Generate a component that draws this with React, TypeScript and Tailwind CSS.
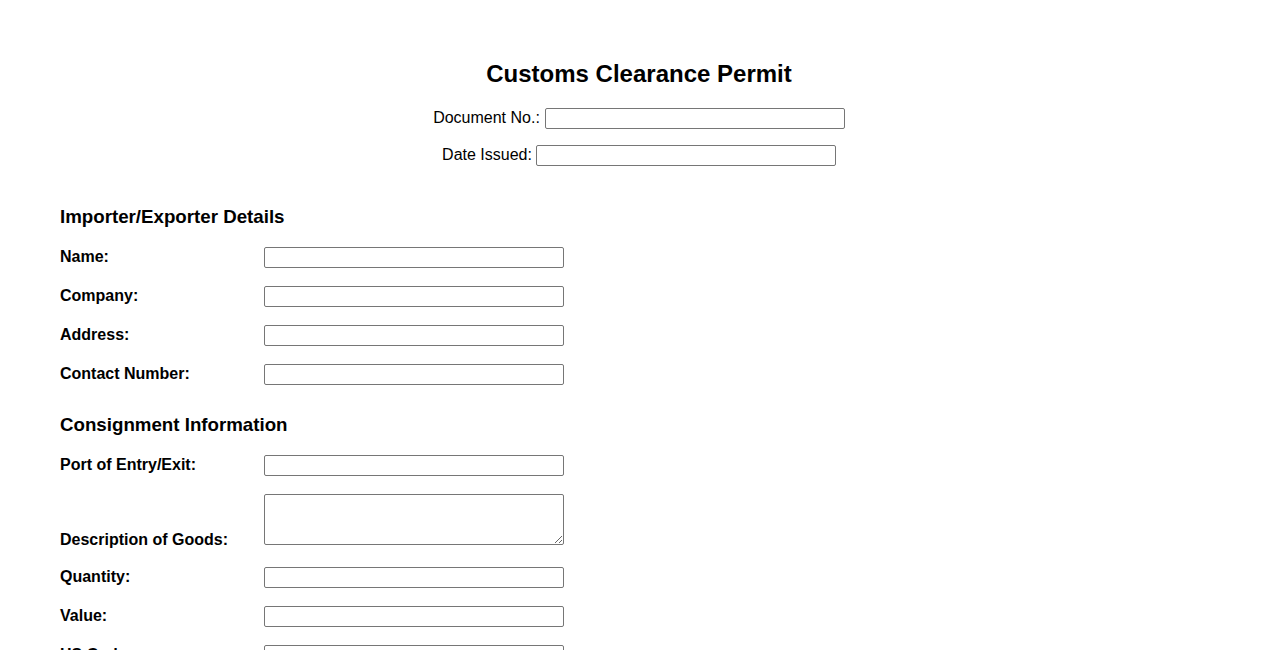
import React from "react";

const inputCls = "h-[21px] w-[300px] border border-[#767676] rounded-[2px] bg-white px-[2px] text-[13px] outline-none";

function Row({ label }: { label: string }) {
  return (
    <div className="flex items-center mb-[18px]">
      <label className="w-[204px] shrink-0 font-bold text-[16px] leading-[18px] pb-[2px]">{label}</label>
      <input type="text" className={inputCls} />
    </div>
  );
}

export default function App() {
  return (
    <div
      className="min-h-[650px] bg-white text-black px-[60px] pt-[60px]"
      style={{ fontFamily: '"Liberation Sans", Arial, sans-serif' }}
    >
      <h1 className="text-center font-bold text-[24px] leading-[28px]">Customs Clearance Permit</h1>
      <div className="flex justify-center items-center mt-[20px]">
        <span className="text-[16px] leading-[18px] mr-[5px] pb-[2px]">Document No.:</span>
        <input type="text" className={inputCls} />
      </div>
      <div className="flex justify-center items-center mt-[16px]">
        <span className="text-[16px] leading-[18px] mr-[4px] pb-[2px]">Date Issued:</span>
        <input type="text" className={inputCls} />
      </div>

      <h3 className="font-bold text-[18.72px] leading-[22px] mt-[40px] mb-[19px]">Importer/Exporter Details</h3>
      <Row label="Name:" />
      <Row label="Company:" />
      <Row label="Address:" />
      <Row label="Contact Number:" />

      <h3 className="font-bold text-[18.72px] leading-[22px] mt-[29px] mb-[19px]">Consignment Information</h3>
      <Row label="Port of Entry/Exit:" />
      <div className="flex items-end mb-[22px]">
        <label className="w-[204px] shrink-0 font-bold text-[16px] leading-[18px] mb-[-4px]">Description of Goods:</label>
        <textarea className="h-[51px] w-[300px] border border-[#767676] rounded-[2px] bg-white p-[2px] text-[13px] outline-none resize-y block" />
      </div>
      <Row label="Quantity:" />
      <Row label="Value:" />
      <Row label="HS Code:" />
    </div>
  );
}
